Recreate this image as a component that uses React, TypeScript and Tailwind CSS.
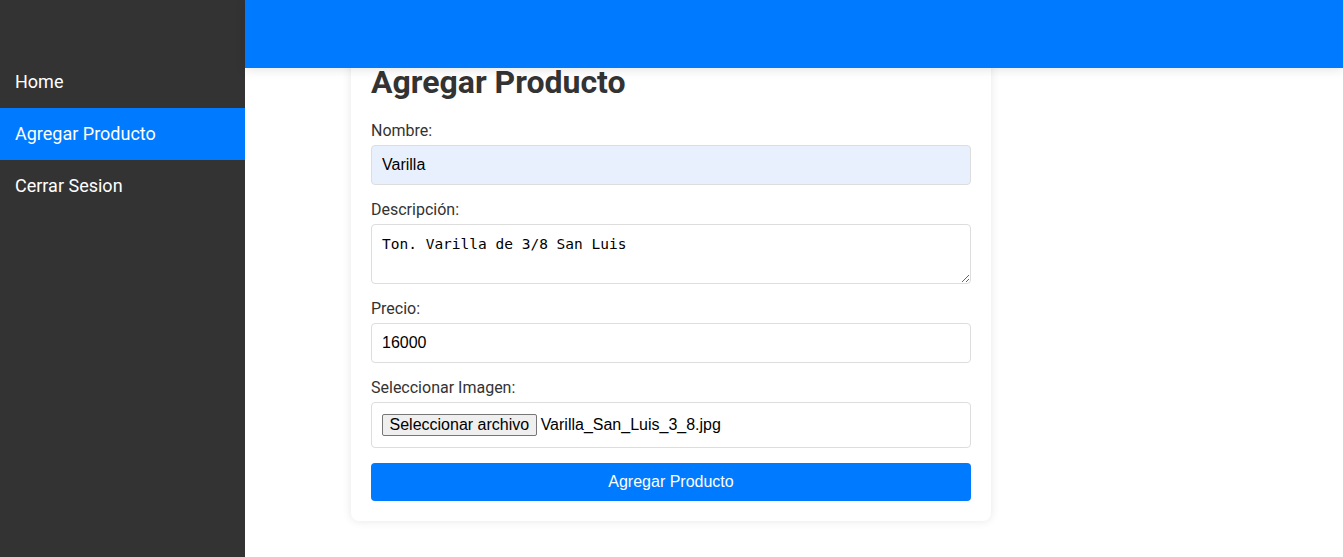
import React from "react";

export default function App() {
  return (
    <div className="flex h-[557px] w-[1343px] overflow-hidden bg-white font-['Roboto',sans-serif]">
      <aside className="w-[245px] shrink-0 bg-[#333333] pt-[56px] text-white">
        <div className="px-[15px] py-[15px] text-[18px] leading-[22px]">Home</div>
        <div className="bg-[#007bff] px-[15px] py-[15px] text-[18px] leading-[22px]">Agregar Producto</div>
        <div className="px-[15px] py-[15px] text-[18px] leading-[22px]">Cerrar Sesion</div>
      </aside>
      <main className="relative flex-1 pl-[106px] pt-[43px]">
        <div className="absolute left-0 right-0 top-0 z-10 h-[68px] bg-[#007bff] shadow-[0_2px_10px_rgba(0,0,0,0.1)]" />
        <div className="w-[640px] rounded-[8px] bg-white p-[20px] shadow-[0_0_10px_rgba(0,0,0,0.1)]">
          <h2 className="mb-[20px] text-[32px] font-bold leading-[38px] text-[#333333]">Agregar Producto</h2>
          <div className="mb-[15px]">
            <label className="mb-[5px] block text-[16px] leading-[19px] text-[#333333]">Nombre:</label>
            <input
              readOnly
              defaultValue="Varilla"
              className="block h-[40px] w-full rounded-[4px] border border-[#dddddd] bg-[#e8f0fe] px-[10px] font-['Liberation_Sans',Arial,sans-serif] text-[16px] text-black outline-none"
            />
          </div>
          <div className="mb-[15px]">
            <label className="mb-[5px] block text-[16px] leading-[19px] text-[#333333]">Descripción:</label>
            <textarea
              readOnly
              defaultValue="Ton. Varilla de 3/8 San Luis"
              className="block h-[60px] w-full rounded-[4px] border border-[#dddddd] bg-white px-[10px] pb-[9px] pt-[10px] font-['DejaVu_Sans_Mono',monospace] text-[14.5px] leading-[18px] text-black outline-none"
            />
          </div>
          <div className="mb-[15px]">
            <label className="mb-[5px] block text-[16px] leading-[19px] text-[#333333]">Precio:</label>
            <input
              readOnly
              defaultValue="16000"
              className="block h-[40px] w-full rounded-[4px] border border-[#dddddd] bg-white px-[10px] font-['Liberation_Sans',Arial,sans-serif] text-[16px] text-black outline-none"
            />
          </div>
          <div className="mb-[15px]">
            <label className="mb-[5px] block text-[16px] leading-[19px] text-[#333333]">Seleccionar Imagen:</label>
            <div className="flex h-[46px] w-full items-center rounded-[4px] border border-[#dddddd] bg-white px-[10px] font-['Liberation_Sans',Arial,sans-serif] text-[16px] text-black">
              <span className="mr-[4px] rounded-[2px] border border-[#767676] bg-[#efefef] px-[6.5px] leading-[20px]">Seleccionar archivo</span>
              <span>Varilla_San_Luis_3_8.jpg</span>
            </div>
          </div>
          <button className="block h-[38px] w-full rounded-[4px] bg-[#007bff] font-['Liberation_Sans',Arial,sans-serif] text-[16px] text-white">
            Agregar Producto
          </button>
        </div>
      </main>
    </div>
  );
}
